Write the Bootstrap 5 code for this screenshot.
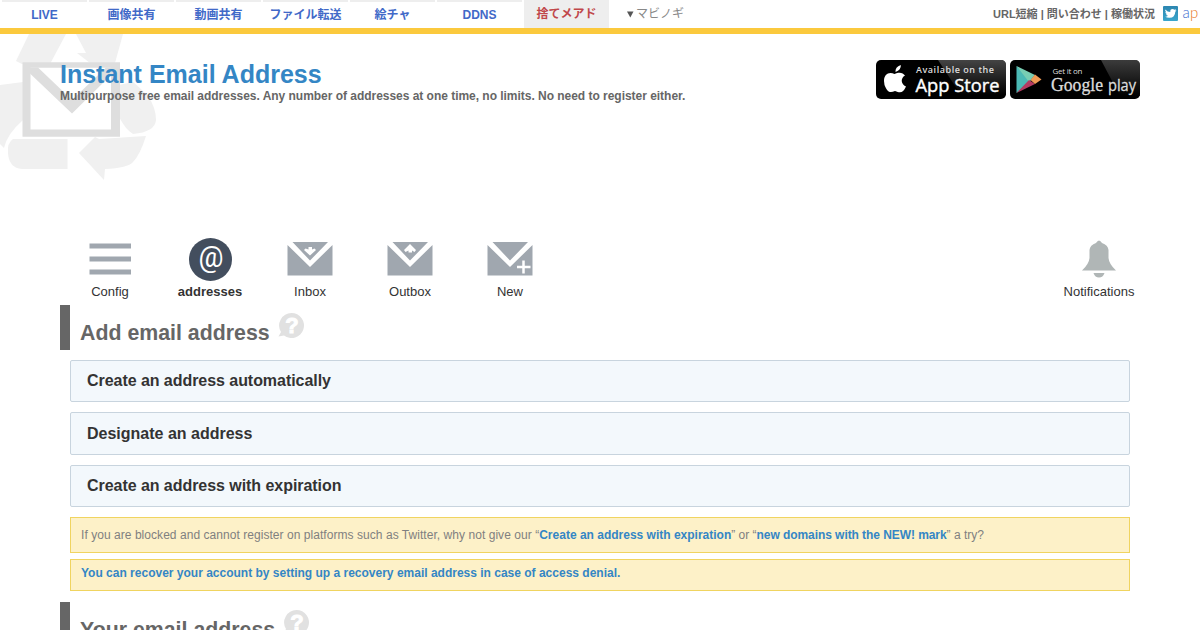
<!DOCTYPE html>
<html lang="en">
<head>
<meta charset="utf-8">
<meta name="viewport" content="width=device-width, initial-scale=1">
<title>Instant Email Address</title>
<link href="https://cdn.jsdelivr.net/npm/bootstrap@5.3.0/dist/css/bootstrap.min.css" rel="stylesheet">
<style>
body{font-family:"Liberation Sans","Noto Sans CJK JP",sans-serif;font-size:12px;line-height:18px;color:#666;background:#fff;overflow:hidden}
a{text-decoration:none}
.topbar{height:34px;border-bottom:6px solid #fbc93d;padding-left:2px;gap:2px}
.tab{width:85px;height:28px;border-top:2px solid #eee;line-height:26px;text-align:center;font-weight:bold;color:#4169c8;white-space:nowrap}
.tab.current{background:#eee;color:#c0474a;line-height:24px}
.more{color:#888;line-height:28px;margin-left:15px}
.more svg{margin-right:2px}
.util{font-size:11px;font-weight:bold;line-height:28px;white-space:nowrap}
.watermark{position:absolute;left:0;top:34px;z-index:-1}
.wrap{width:1080px;margin:0 auto}
.masthead{height:204px;padding-top:26px}
.tagline{letter-spacing:-.028px}
h1{font-size:25px;line-height:29px;font-weight:bold;color:#3486c5;margin:0}
.menu{height:67px;padding:0}
.item{width:100px;color:#333;font-size:13px;line-height:18px}
.item svg{display:block;margin:0 auto 2px}
.sec{border-left:10px solid #666;height:45px;padding-left:10px;font-size:21.330px;font-weight:bold;margin:0;color:#666;line-height:25px}
.sec span{padding-top:16px}
.sec svg{margin:7px 0 0 8px}
.panels{padding-top:10px}
.panel{margin:0 10px 10px;height:42.330px;border:1px solid #c8d4de;border-radius:2px;background:#f3f8fc;color:#333;font-size:16px;font-weight:bold;line-height:40.400px;padding-left:16px;letter-spacing:-.05px}
.panel-mid{line-height:41.500px;letter-spacing:0}
.note{margin:0 10px 6px;border:1px solid #f0d460;background:#fdf1c8;padding-left:10px;color:#808080}
.note-tall{height:36px;line-height:34px}
.note-short{height:32px;line-height:26px}
.intro{letter-spacing:.048px}
.strong-link{font-weight:bold;color:#3486c5}
.tight{letter-spacing:-.07px}
</style>
</head>
<body>
<header class="topbar d-flex">
  <a class="tab">LIVE</a><a class="tab">画像共有</a><a class="tab">動画共有</a><a class="tab">ファイル転送</a><a class="tab">絵チャ</a><a class="tab">DDNS</a><a class="tab current">捨てメアド</a>
  <span class="more"><svg width="8" height="8" fill="#555"><path d="M1 .5H7.500L4.300 6.500Z"/></svg>マビノギ</span>
  <div class="util ms-auto d-flex">URL短縮 | 問い合わせ | 稼働状況
    <svg class="ms-2" width="37" height="28" viewBox="0 0 37 28">
      <defs><linearGradient id="tw" x2="0" y2="1"><stop stop-color="#2c86b0"/><stop offset="1" stop-color="#3aa6cc"/></linearGradient></defs>
      <rect y="6" width="15" height="15" rx="1" fill="url(#tw)"/>
      <path fill="#fff" d="M2.3 9.5Q4.5 12 7.3 12Q7 9 9.5 9Q10.7 9 11.3 9.7L13 9.2L12.3 10.5L13.5 10.4L12.3 11.7Q12 17.7 6.6 17.8Q4 17.9 2.2 16.7Q4 16.6 5 15.7Q3.3 15.3 3 14.2H4Q2.3 13.3 2.3 12L3.2 12.2Q1.7 10.9 2.3 9.5"/>
      <text x="19.5" y="18" font-family="Lato,sans-serif" font-weight="300" font-size="15" fill="#3d6ed0">a</text>
      <text x="27" y="18" font-family="Lato,sans-serif" font-weight="300" font-size="15" fill="#e77522">p</text>
    </svg>
  </div>
</header>
<svg class="watermark" width="160" height="150" viewBox="0 34 160 150">
  <g fill="#f0f0f0"><path d="M29 34H66L50 64H22L16 61Z"/><path d="M76 34H123L115 63H90L77 53H86Z"/>
  <path d="M0 85L23 82V120Q7 134 4 148L0 144Z"/><path d="M13 139H67.500V169H22Q9 168 8 153Q7 143 13 139Z"/>
  <path d="M79 153L95 137L99 139L146 136Q140 155 133 162Q128 168 105 169L104 180Z"/>
  <path d="M119 85L133 82Q139 87 148 96Q156 108 156 120Q155 132 133 134Q126 130 119 117Z"/></g>
  <path fill="#fff" d="M30 66H111V130H30Z"/>
  <path fill="#dedede" fill-rule="evenodd" d="M22.500 62.300H120V136.700H22.500ZM30.500 67.700V129.500H111V67.700Z"/>
  <path fill="#dedede" d="M30 67.500H38L72 100L106 67.500H111V75L72 113.500L30 73.500Z"/>
</svg>
<main class="wrap">
  <div class="masthead d-flex justify-content-between">
    <div><h1>Instant Email Address</h1><b class="d-block lh-sm tagline">Multipurpose free email addresses. Any number of addresses at one time, no limits. No need to register either.</b></div>
    <div class="d-flex gap-1">
      <svg width="130" height="39" viewBox="0 0 130 39">
        <defs><linearGradient id="shine" x2="0" y2="1"><stop stop-color="#555"/><stop offset="1" stop-color="#000"/></linearGradient></defs>
        <rect width="130" height="39" rx="5"/><path d="M62 0H125Q130 0 130 5V35H85Z" fill="url(#shine)" opacity=".8"/>
        <path fill="#fff" d="M19.500 12Q19 7 24.800 5Q25.300 10 19.500 12M8 21C8 14 13 11.500 18.500 14C23 11.600 27 12.500 29 15.500C24.500 18 24.500 24 30 26.500C27 33 24.500 33.300 19 31C14 33 11.500 32.500 8.500 25Z"/>
        <text x="40" y="13" fill="#ddd" font-family="Open Sans" font-weight="600" font-size="9" textLength="78">Available on the</text>
        <text x="39.500" y="31.500" fill="#fff" font-family="Open Sans" font-weight="500" font-size="19" stroke="#fff" stroke-width=".4" textLength="84" lengthAdjust="spacingAndGlyphs">App Store</text>
      </svg>
      <svg width="130" height="39" viewBox="0 0 130 39">
        <rect width="130" height="39" rx="5"/><path d="M91 0H125Q130 0 130 5V36H110Z" fill="url(#shine)" opacity=".7"/>
        <path fill="#4bb9b5" d="M6.500 6V33L21 20Z"/><path fill="#78cdb3" d="M6.500 6L25 15L19 22Z"/><path fill="#b43b62" d="M6.500 33L19 20L25 24Z"/><path fill="#f09b55" d="M25 14.500L31.500 19.500L25 24L20.500 20Z"/>
        <text x="42.500" y="14" fill="#ddd" font-family="Open Sans" font-weight="500" font-size="8" textLength="30">Get it on</text>
        <text x="41" y="31" fill="#ddd" font-family="Liberation Serif" font-size="19.500" stroke="#ddd" stroke-width=".3" textLength="52" lengthAdjust="spacingAndGlyphs">Google</text>
        <text x="98" y="31" fill="#ddd" font-family="Open Sans" font-size="16.500" stroke="#ddd" stroke-width=".3" textLength="28" lengthAdjust="spacingAndGlyphs">play</text>
      </svg>
    </div>
  </div>
  <nav class="menu d-flex text-center">
    <a class="item"><svg width="46" height="43" fill="#a0a7af"><path d="M2.500 5.500H44V10.500H2.500ZM2.500 18.500H44V23.500H2.500ZM2.500 31.500H44V36.500H2.500Z"/></svg>Config</a>
    <a class="item fw-bold"><svg width="44" height="43"><circle cx="22.500" cy="21.500" r="21.500" fill="#434e5e"/><text x="10.500" y="29" font-family="Roboto" font-weight="400" font-size="29" fill="#fff" textLength="25" lengthAdjust="spacingAndGlyphs">@</text></svg>addresses</a>
    <a class="item"><svg width="46" height="43" fill="#a0a7af"><path d="M5.500 4H41L23 22.500ZM.5 7L23 29L45.500 7V37.500H.5Z"/><path fill="#fff" d="M21.500 9H25V11.500L27.500 10.500L29 12L23 17.500L17 12L18.500 10.500L21.500 11.500Z"/></svg>Inbox</a>
    <a class="item"><svg width="46" height="43" fill="#a0a7af"><path d="M5.500 4H41L23 22.500ZM.5 7L23 29L45.500 7V37.500H.5Z"/><path fill="#fff" d="M23 6L29 12L27.500 14L25 12.500V14.500H21.500V12.500L18.500 14L17 12Z"/></svg>Outbox</a>
    <a class="item"><svg width="46" height="43" fill="#a0a7af"><path d="M5.500 4H41L23 22.500ZM.5 7L23 29L45.500 7V37.500H.5Z"/><path fill="none" stroke="#fff" stroke-width="2.500" d="M36.500 22.500V35.500M30 29H43.500"/></svg>New</a>
    <a class="item ms-auto" style="width:82px"><svg width="36" height="43" fill="#b0b6b6"><path d="M1 32.500Q8 26 8.500 20V12Q9 7 15 5Q18 0 21 5Q27 7 27.500 12V20Q28 26 35 32.500ZM12.500 35H23.500Q22 39.500 18 39.500Q14 39.500 12.500 35Z"/></svg>Notifications</a>
  </nav>
  <h2 class="sec d-flex"><span>Add email address</span><svg width="26" height="27" viewBox="0 0 26 27"><path fill="#e1e1e1" d="M13.500 1A12.500 12.500 0 1 1 6 23.500L.5 24.500L3 20A12.500 12.500 0 0 1 13.500 1"/><text x="14" y="21" text-anchor="middle" font-size="22" font-weight="bold" fill="#fff" stroke="#fff">?</text></svg></h2>
  <div class="panels">
    <div class="panel">Create an address automatically</div>
    <div class="panel panel-mid">Designate an address</div>
    <div class="panel">Create an address with expiration</div>
    <div class="note note-tall"><span class="intro">If you are blocked and cannot register on platforms such as Twitter, why not give our “</span><a class="strong-link">Create an address with expiration</a>” or “<a class="strong-link tight">new domains with the NEW! mark</a>” a try?</div>
    <div class="note note-short"><a class="strong-link">You can recover your account by setting up a recovery email address in case of access denial.</a></div>
  </div>
  <h2 class="sec d-flex" style="margin-top:11px"><span>Your email address</span><svg width="26" height="27" viewBox="0 0 26 27"><path fill="#e1e1e1" d="M13.500 1A12.500 12.500 0 1 1 6 23.500L.5 24.500L3 20A12.500 12.500 0 0 1 13.500 1"/><text x="14" y="21" text-anchor="middle" font-size="22" font-weight="bold" fill="#fff" stroke="#fff">?</text></svg></h2>
</main>
<script src="https://cdn.jsdelivr.net/npm/bootstrap@5.3.0/dist/js/bootstrap.bundle.min.js"></script>
</body>
</html>
